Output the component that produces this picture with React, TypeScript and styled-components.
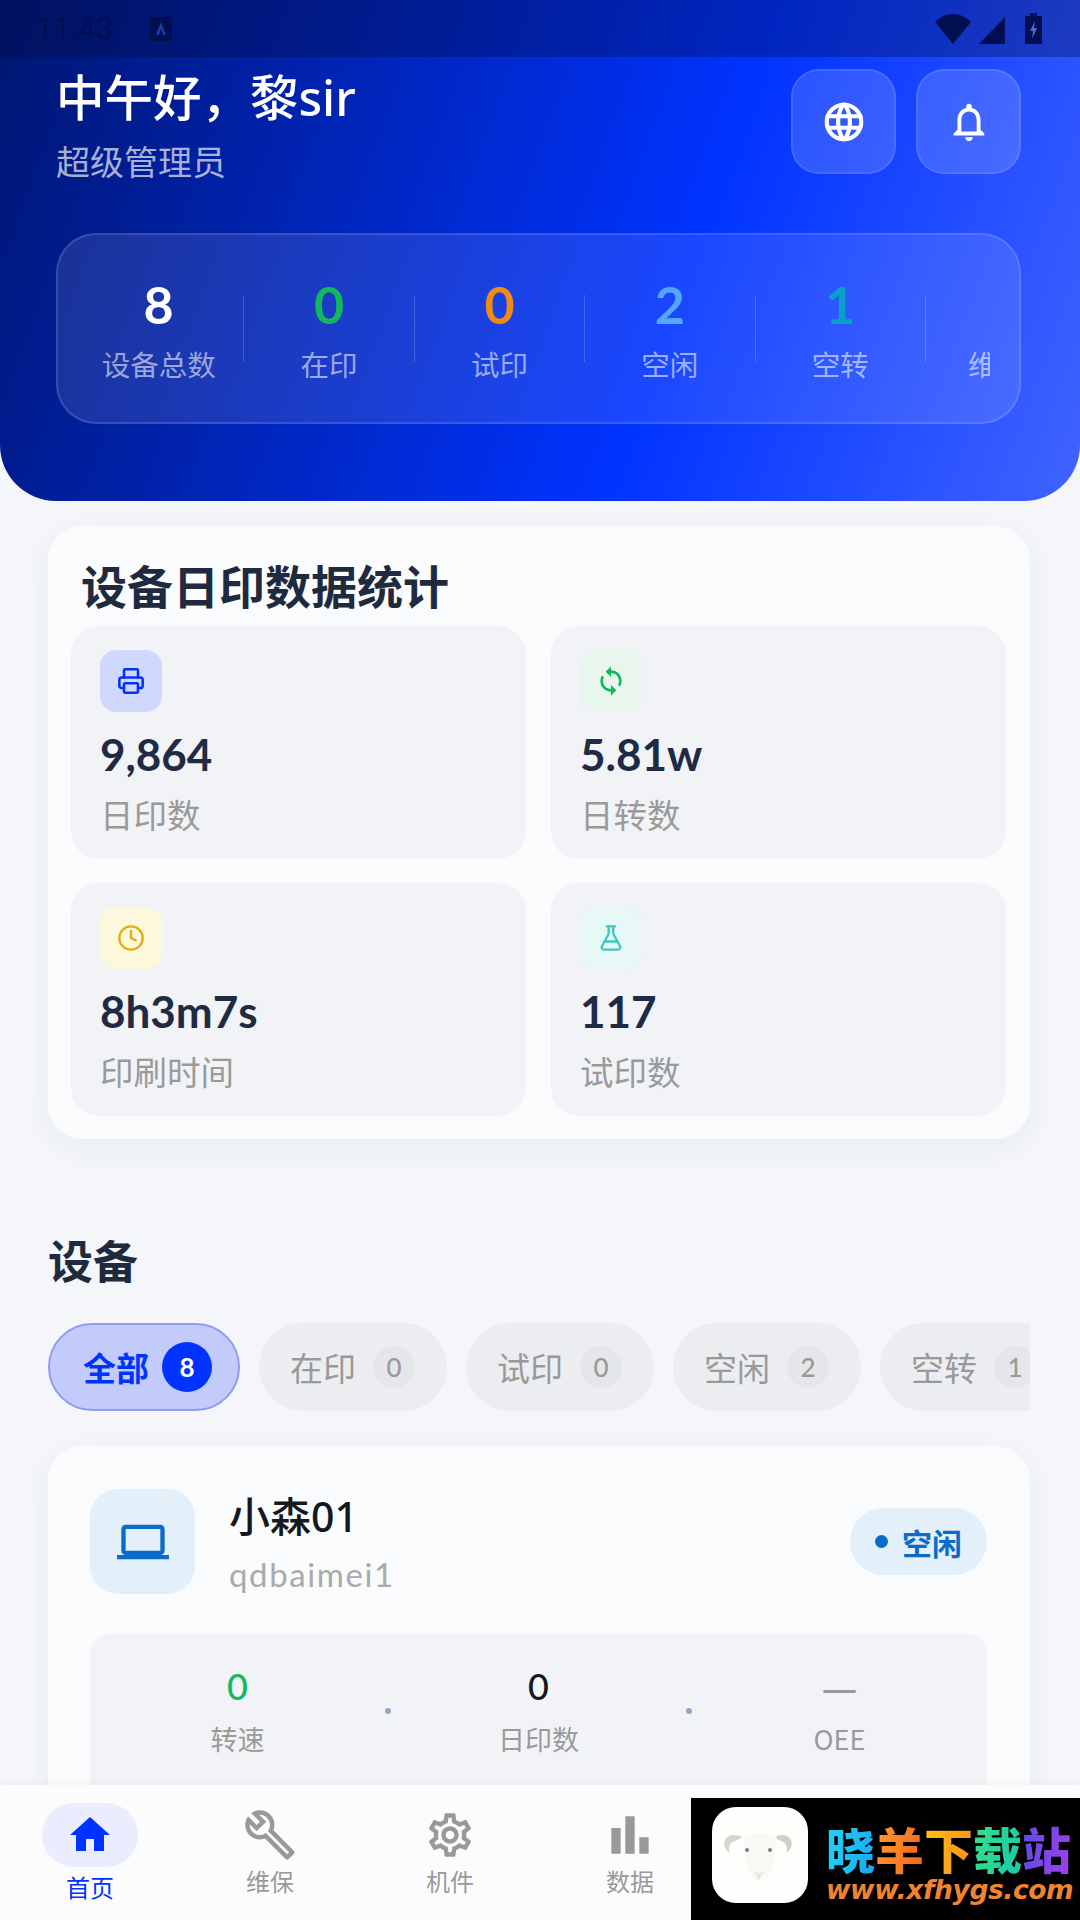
import { Fragment } from "react";
import styled, { createGlobalStyle } from "styled-components";
import { Printer, Clock, FlaskConical } from "lucide-react";
import { TbWorld } from "react-icons/tb";
import {
  MdBarChart,
  MdHome,
  MdLaptop,
  MdOutlineBuild,
  MdOutlineNotifications,
  MdOutlineSettings,
  MdSync,
} from "react-icons/md";

const cjk = `"Noto Sans CJK SC", sans-serif`;
const latin = `Lato, "Noto Sans CJK SC", sans-serif`;

const GlobalStyle = createGlobalStyle`
  html, body {
    margin: 0;
    padding: 0;
    background: #f4f6f9;
  }
  * {
    box-sizing: border-box;
  }
`;

const Page = styled.div`
  position: relative;
  display: flex;
  flex-direction: column;
  width: 1080px;
  height: 1920px;
  overflow: hidden;
  font-family: ${latin};
  background: #f4f6f9;
`;

const Header = styled.header`
  flex: none;
  height: 501px;
  border-radius: 0 0 56px 56px;
  background: linear-gradient(110deg, #001670 0%, #0033ff 62%, #4164ff 100%);
`;

const StatusBar = styled.div`
  display: flex;
  align-items: center;
  height: 57px;
  padding: 0 38px 0 36px;
  color: #000f52;
  background: rgba(0, 8, 60, 0.32);
`;

const Time = styled.span`
  font-family: "Roboto", sans-serif;
  font-size: 31px;
  width: 114px;
`;

const StatusIcons = styled.div`
  display: flex;
  align-items: center;
  gap: 8px;
  margin-left: auto;
`;

const TopRow = styled.div`
  display: flex;
  justify-content: space-between;
  padding: 12px 59px 0 56px;
`;

const Hello = styled.h1`
  margin: 0;
  font-family: "Noto Sans", ${cjk};
  font-size: 48.5px;
  line-height: 56px;
  font-weight: 500;
  color: #fff;
`;

const Role = styled.div`
  margin-top: 14px;
  font-family: ${cjk};
  font-size: 34px;
  line-height: 44px;
  color: rgba(255, 255, 255, 0.66);
`;

const HeadButtons = styled.div`
  display: flex;
  gap: 20px;
`;

const HeadButton = styled.div`
  display: flex;
  align-items: center;
  justify-content: center;
  width: 105px;
  height: 105px;
  border-radius: 28px;
  color: #fff;
  background: rgba(255, 255, 255, 0.15);
  border: 2px solid rgba(255, 255, 255, 0.1);
`;

const StatsPanel = styled.div`
  display: flex;
  align-items: center;
  height: 191px;
  margin: 50px 59px 0 56px;
  border-radius: 40px;
  padding: 0 29px 0 16px;
  background: rgba(255, 255, 255, 0.1);
  border: 2px solid rgba(255, 255, 255, 0.13);
`;

const StatsTrack = styled.div`
  display: flex;
  align-items: center;
  flex: 1;
  overflow: hidden;
`;

const StatItem = styled.div`
  flex: none;
  width: 169.4px;
  text-align: center;
`;

const StatValue = styled.div<{ $color: string }>`
  font-size: 52px;
  line-height: 60px;
  font-weight: 700;
  color: ${(p) => p.$color};
`;

const StatLabel = styled.div`
  margin-top: 11px;
  font-family: ${cjk};
  font-size: 28.5px;
  line-height: 38px;
  white-space: nowrap;
  color: rgba(255, 255, 255, 0.56);
`;

const StatDivider = styled.div`
  flex: none;
  width: 1px;
  height: 67px;
  background: rgba(255, 255, 255, 0.18);
`;

const Main = styled.main`
  flex: 1;
  min-height: 0;
  overflow: hidden;
  padding: 25px 50px 0 48px;
`;

const Card = styled.section`
  border-radius: 34px;
  background: #fafbfc;
  box-shadow: 0 8px 28px rgba(40, 60, 110, 0.06);
`;

const DailyCard = styled(Card)`
  padding: 27px 24px 23px 23px;
`;

const DailyTitle = styled.h2`
  margin: 0 0 11px 5px;
  padding-left: 5px;
  font-family: ${cjk};
  font-size: 46px;
  line-height: 62px;
  font-weight: 700;
  color: #1f2a3f;
`;

const TileGrid = styled.div`
  display: grid;
  grid-template-columns: 1fr 1fr;
  gap: 24px 25px;
`;

const Tile = styled.div`
  height: 233px;
  border-radius: 28px;
  padding: 24px 29px 0;
  background: #f1f3f6;
`;

const TileIcon = styled.div<{ $bg: string; $color: string }>`
  display: flex;
  align-items: center;
  justify-content: center;
  width: 62px;
  height: 62px;
  border-radius: 16px;
  background: ${(p) => p.$bg};
  color: ${(p) => p.$color};
`;

const TileValue = styled.div`
  margin-top: 16px;
  font-size: 44px;
  line-height: 52px;
  font-weight: 700;
  color: #1f2a44;
`;

const TileLabel = styled.div`
  margin-top: 12px;
  font-family: ${cjk};
  font-size: 33.5px;
  line-height: 44px;
  color: #9a9a9a;
`;

const SectionTitle = styled.h2`
  margin: 90px 0 32px;
  font-family: ${cjk};
  font-size: 45px;
  line-height: 62px;
  font-weight: 700;
  color: #1f2a3f;
`;

const ChipRow = styled.div`
  display: flex;
  gap: 19px;
  height: 88px;
  overflow: hidden;
`;

const Chip = styled.div<{ $active?: boolean }>`
  flex: none;
  display: flex;
  align-items: center;
  gap: ${(p) => (p.$active ? 13 : 17)}px;
  height: 88px;
  padding: 0 ${(p) => (p.$active ? "26px 0 33px" : "32px 0 31px")};
  border-radius: 44px;
  font-family: ${cjk};
  font-size: 33px;
  font-weight: ${(p) => (p.$active ? 700 : 400)};
  color: ${(p) => (p.$active ? "#0033ff" : "#999")};
  background: ${(p) => (p.$active ? "#c3cbfb" : "#ebedf1")};
  border: ${(p) => (p.$active ? "2px solid #8f9cf0" : "none")};
`;

const ChipCount = styled.span<{ $active?: boolean }>`
  display: flex;
  align-items: center;
  justify-content: center;
  width: ${(p) => (p.$active ? 50 : 42)}px;
  height: ${(p) => (p.$active ? 50 : 42)}px;
  border-radius: 50%;
  font-family: ${latin};
  font-size: 26px;
  font-weight: ${(p) => (p.$active ? 700 : 500)};
  color: ${(p) => (p.$active ? "#fff" : "#999")};
  background: ${(p) => (p.$active ? "#0033ff" : "#e4e6ea")};
`;

const DeviceCard = styled(Card)`
  margin-top: 35px;
  padding: 43px 43px 0 42px;
  height: 500px;
`;

const DeviceHead = styled.div`
  display: flex;
  align-items: center;
`;

const DeviceIcon = styled.div`
  display: flex;
  align-items: center;
  justify-content: center;
  width: 105px;
  height: 105px;
  border-radius: 28px;
  color: #0a6cc8;
  background: #e3eff9;
`;

const DeviceInfo = styled.div`
  flex: 1;
  margin-left: 34px;
`;

const DeviceName = styled.div`
  font-family: "Noto Sans", ${cjk};
  font-size: 41px;
  line-height: 50px;
  font-weight: 500;
  color: #14181f;
`;

const DeviceCode = styled.div`
  margin-top: 14px;
  font-size: 33px;
  line-height: 38px;
  letter-spacing: 1.6px;
  color: #aaa;
`;

const StateBadge = styled.div`
  display: flex;
  align-items: center;
  gap: 14px;
  height: 67px;
  padding: 0 25px;
  border-radius: 34px;
  font-family: ${cjk};
  font-size: 30px;
  font-weight: 700;
  color: #0a6cc8;
  background: #e3eff9;
`;

const StateDot = styled.span`
  width: 13px;
  height: 13px;
  border-radius: 50%;
  background: #0a6cc8;
`;

const DeviceStats = styled.div`
  display: flex;
  align-items: center;
  height: 200px;
  margin-top: 40px;
  padding-bottom: 46px;
  border-radius: 20px;
  background: #f1f3f6;
`;

const DeviceStat = styled.div`
  flex: 1;
  text-align: center;
`;

const DeviceValue = styled.div<{ $color: string }>`
  font-size: 36px;
  line-height: 44px;
  font-weight: 500;
  color: ${(p) => p.$color};
`;

const DashValue = styled(DeviceValue)`
  font-family: ${cjk};
  font-size: 40px;
`;

const DeviceLabel = styled.div`
  margin-top: 12px;
  font-family: ${cjk};
  font-size: 27px;
  line-height: 38px;
  color: #9a9a9a;
`;

const DeviceDot = styled.span`
  flex: none;
  width: 6px;
  height: 6px;
  border-radius: 50%;
  background: #8fa6c4;
`;

const Nav = styled.nav`
  flex: none;
  display: flex;
  height: 135px;
  background: #fcfcfd;
  box-shadow: 0 -2px 10px rgba(40, 60, 110, 0.04);
`;

const NavItem = styled.div<{ $active?: boolean }>`
  flex: none;
  width: 180px;
  display: flex;
  flex-direction: column;
  align-items: center;
  padding-top: ${(p) => (p.$active ? 18 : 24)}px;
  font-family: ${cjk};
  font-size: 24px;
  color: ${(p) => (p.$active ? "#0033ff" : "#999")};
`;

const NavIcon = styled.div<{ $active?: boolean }>`
  display: flex;
  align-items: center;
  justify-content: center;
  width: 96px;
  height: ${(p) => (p.$active ? 64 : 52)}px;
  border-radius: 32px;
  background: ${(p) => (p.$active ? "#e9edfd" : "transparent")};
`;

const NavText = styled.span`
  line-height: 34px;
  margin-top: 3px;
`;

const Watermark = styled.div`
  position: absolute;
  right: 0;
  bottom: 0;
  display: flex;
  align-items: flex-start;
  width: 389px;
  height: 122px;
  padding: 9px 0 0 21px;
  background: #000;
`;

const LogoBox = styled.div`
  flex: none;
  width: 96px;
  height: 96px;
  border-radius: 24px;
  background: #fefefc;
`;

const BrandColumn = styled.div`
  margin: 14px 0 0 18px;
`;

const BrandName = styled.div`
  display: flex;
  font-family: ${cjk};
  font-size: 49px;
  line-height: 54px;
  font-weight: 900;
`;

const BrandChar = styled.span<{ $from: string; $to: string }>`
  background: linear-gradient(100deg, ${(p) => p.$from}, ${(p) => p.$to});
  -webkit-background-clip: text;
  background-clip: text;
  color: transparent;
`;

const BrandUrl = styled.div`
  font-family: "DejaVu Sans", sans-serif;
  font-size: 26.5px;
  line-height: 30px;
  font-weight: 700;
  font-style: italic;
  letter-spacing: -0.4px;
  white-space: nowrap;
  color: #ee8431;
`;

const topStats = [
  { value: "8", label: "设备总数", color: "#ffffff" },
  { value: "0", label: "在印", color: "#12b85c" },
  { value: "0", label: "试印", color: "#f08a12" },
  { value: "2", label: "空闲", color: "#55a6f8" },
  { value: "1", label: "空转", color: "#06a4c4" },
  { value: "5", label: "维保中", color: "#ffffff" },
];

const tiles = [
  { icon: <Printer size={28} strokeWidth={2.2} />, bg: "#d0d8fd", color: "#0033ff", value: "9,864", label: "日印数" },
  { icon: <MdSync size={32} />, bg: "#e9f6ee", color: "#12b85c", value: "5.81w", label: "日转数" },
  { icon: <Clock size={28} strokeWidth={2} />, bg: "#fbf8dc", color: "#e3ae12", value: "8h3m7s", label: "印刷时间" },
  { icon: <FlaskConical size={28} strokeWidth={2} />, bg: "#e7f8f6", color: "#3ecabb", value: "117", label: "试印数" },
];

const chips = [
  { label: "全部", count: 8, active: true },
  { label: "在印", count: 0 },
  { label: "试印", count: 0 },
  { label: "空闲", count: 2 },
  { label: "空转", count: 1 },
];

const navItems = [
  { label: "首页", icon: <MdHome size={48} />, active: true },
  { label: "维保", icon: <MdOutlineBuild size={54} /> },
  { label: "机件", icon: <MdOutlineSettings size={52} /> },
  { label: "数据", icon: <MdBarChart size={56} /> },
];

function SheepLogo() {
  return (
    <svg width="96" height="96" viewBox="0 0 96 96">
      <path d="M30 30c-6-3-14-3-17 3-2 5 0 10 5 13-2-5-1-9 3-11 3-2 6-2 9-5z" fill="#d8d6cb" />
      <path d="M62 30c6-3 14-3 17 3 2 5 0 10-5 13 2-5 1-9-3-11-3-2-6-2-9-5z" fill="#d2d0c4" />
      <path d="M31 30c10-5 24-5 34 0l-4 28c-2 10-8 16-13 16s-11-6-13-16z" fill="#f9f8f4" />
      <circle cx="35" cy="43" r="2" fill="#7b8086" />
      <circle cx="58" cy="43" r="2" fill="#7b8086" />
      <path d="M42 64l5 3 5-3-5 9z" fill="#e9e5db" />
    </svg>
  );
}

function App() {
  return (
    <Page>
      <GlobalStyle />
      <Header>
        <StatusBar>
          <Time>11:43</Time>
          <svg width="22" height="24" viewBox="0 0 22 24">
            <rect width="22" height="24" rx="2" fill="#000f52" />
            <path d="M11 5l5 13h-3l-2-6-2 6H6z" fill="#1d3c9c" />
          </svg>
          <StatusIcons>
            <svg width="36" height="30" viewBox="0 0 36 30">
              <path d="M0 8C5 3 11 0 18 0s13 3 18 8L18 30z" fill="#000f52" />
            </svg>
            <svg width="26" height="27" viewBox="0 0 26 27" style={{ marginTop: 3 }}>
              <path d="M26 0v27H0z" fill="#000f52" />
            </svg>
            <svg width="17" height="31" viewBox="0 0 17 31" style={{ marginLeft: 12 }}>
              <path d="M5 0h7v3h5v28H0V3h5z" fill="#000f52" />
              <path d="M10 8l-5 10h3l-1 8 5-11H9z" fill="#4a69c8" />
            </svg>
          </StatusIcons>
        </StatusBar>
        <TopRow>
          <div>
            <Hello>中午好，黎sir</Hello>
            <Role>超级管理员</Role>
          </div>
          <HeadButtons>
            <HeadButton>
              <TbWorld size={46} strokeWidth={2.2} />
            </HeadButton>
            <HeadButton>
              <MdOutlineNotifications size={46} />
            </HeadButton>
          </HeadButtons>
        </TopRow>
        <StatsPanel>
          <StatsTrack>
            {topStats.map((s, i) => (
              <Fragment key={s.label}>
                <StatItem>
                  <StatValue $color={s.color}>{s.value}</StatValue>
                  <StatLabel>{s.label}</StatLabel>
                </StatItem>
                {i < topStats.length - 1 && <StatDivider />}
              </Fragment>
            ))}
          </StatsTrack>
        </StatsPanel>
      </Header>
      <Main>
        <DailyCard>
          <DailyTitle>设备日印数据统计</DailyTitle>
          <TileGrid>
            {tiles.map((t) => (
              <Tile key={t.label}>
                <TileIcon $bg={t.bg} $color={t.color}>
                  {t.icon}
                </TileIcon>
                <TileValue>{t.value}</TileValue>
                <TileLabel>{t.label}</TileLabel>
              </Tile>
            ))}
          </TileGrid>
        </DailyCard>
        <SectionTitle>设备</SectionTitle>
        <ChipRow>
          {chips.map((c) => (
            <Chip key={c.label} $active={c.active}>
              {c.label}
              <ChipCount $active={c.active}>{c.count}</ChipCount>
            </Chip>
          ))}
        </ChipRow>
        <DeviceCard>
          <DeviceHead>
            <DeviceIcon>
              <MdLaptop size={52} />
            </DeviceIcon>
            <DeviceInfo>
              <DeviceName>小森01</DeviceName>
              <DeviceCode>qdbaimei1</DeviceCode>
            </DeviceInfo>
            <StateBadge>
              <StateDot />
              空闲
            </StateBadge>
          </DeviceHead>
          <DeviceStats>
            <DeviceStat>
              <DeviceValue $color="#12b85c">0</DeviceValue>
              <DeviceLabel>转速</DeviceLabel>
            </DeviceStat>
            <DeviceDot />
            <DeviceStat>
              <DeviceValue $color="#14181f">0</DeviceValue>
              <DeviceLabel>日印数</DeviceLabel>
            </DeviceStat>
            <DeviceDot />
            <DeviceStat>
              <DashValue $color="#9a9a9a">—</DashValue>
              <DeviceLabel>OEE</DeviceLabel>
            </DeviceStat>
          </DeviceStats>
        </DeviceCard>
      </Main>
      <Nav>
        {navItems.map((n) => (
          <NavItem key={n.label} $active={n.active}>
            <NavIcon $active={n.active}>{n.icon}</NavIcon>
            <NavText>{n.label}</NavText>
          </NavItem>
        ))}
      </Nav>
      <Watermark>
        <LogoBox>
          <SheepLogo />
        </LogoBox>
        <BrandColumn>
          <BrandName>
            <BrandChar $from="#22d3f5" $to="#1aa8f0">晓</BrandChar>
            <BrandChar $from="#ff9a2a" $to="#f4651e">羊</BrandChar>
            <BrandChar $from="#ffc21a" $to="#ff8a1a">下</BrandChar>
            <BrandChar $from="#35e08a" $to="#1cc8a8">载</BrandChar>
            <BrandChar $from="#5a4ce8" $to="#a040e8">站</BrandChar>
          </BrandName>
          <BrandUrl>www.xfhygs.com</BrandUrl>
        </BrandColumn>
      </Watermark>
    </Page>
  );
}

export default App;
